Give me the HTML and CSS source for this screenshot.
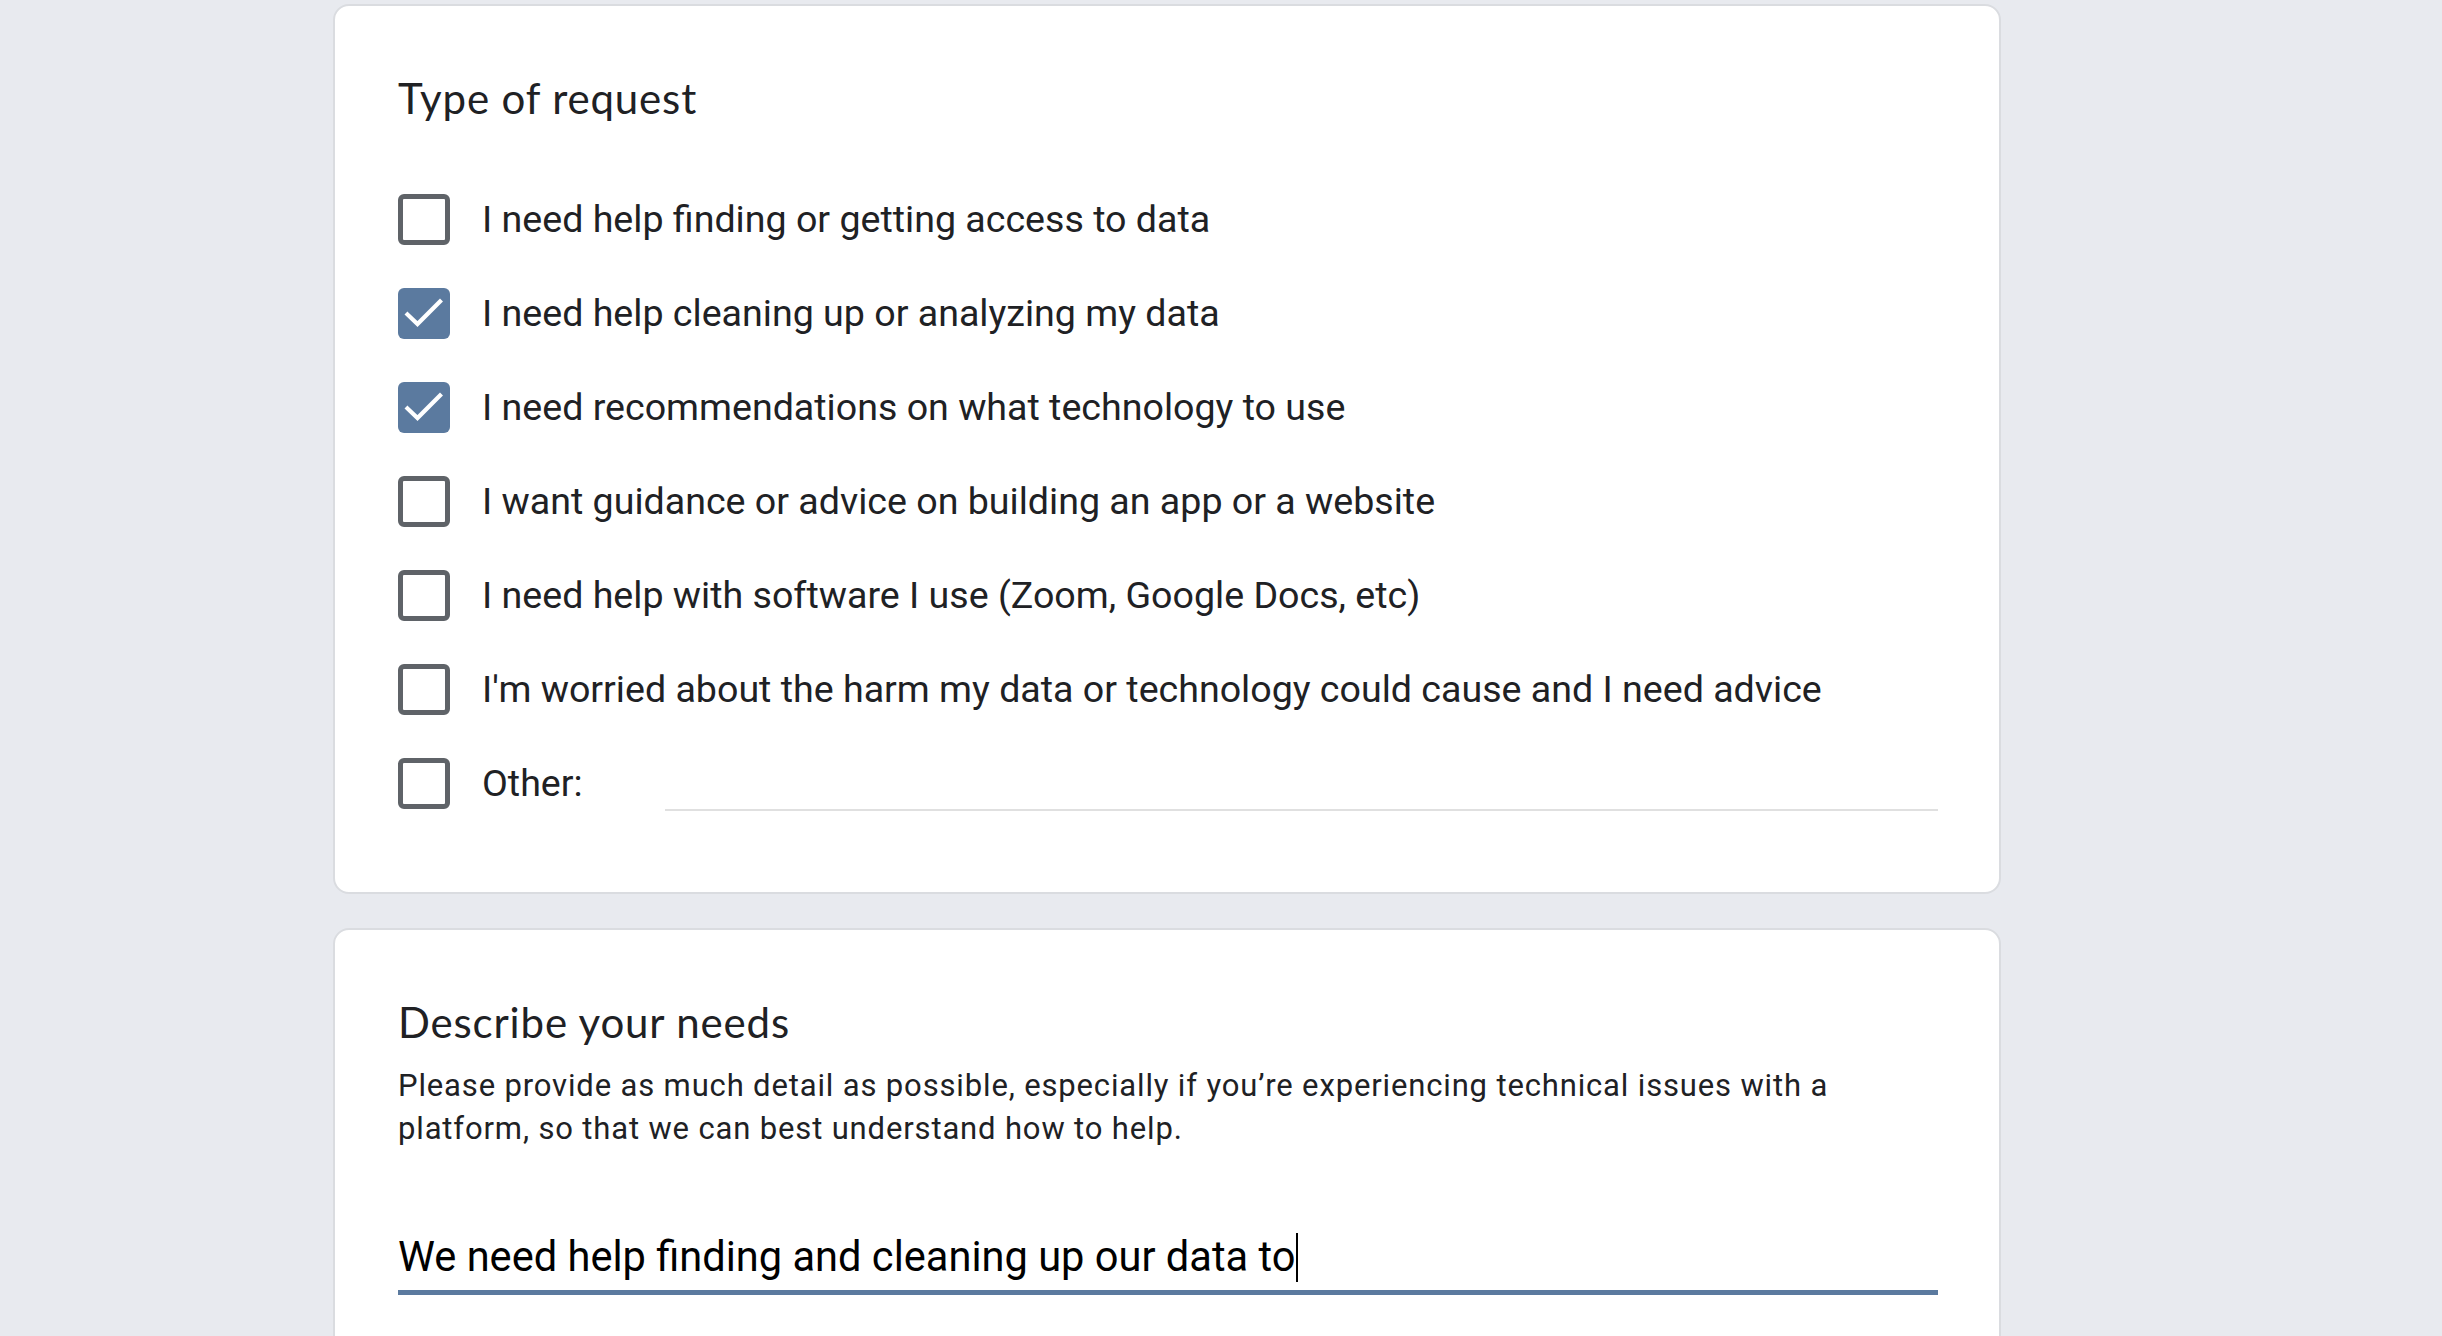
FILE: index.html
```html
<!DOCTYPE html>
<html lang="en">
<head>
<meta charset="utf-8">
<title>Request form</title>
<link rel="stylesheet" href="styles.css">
</head>
<body>
<main class="page">
  <section class="card">
    <h2 class="q-title">Type of request</h2>
    <ul class="options">
      <li class="option"><span class="box"></span><span class="label">I need help finding or getting access to data</span></li>
      <li class="option"><span class="box checked"><svg viewBox="0 0 52 52" width="52" height="52"><path d="M9.5 26.5 L19.5 36 L42 13.5" fill="none" stroke="#fff" stroke-width="4.2" stroke-linecap="square"/></svg></span><span class="label">I need help cleaning up or analyzing my data</span></li>
      <li class="option"><span class="box checked"><svg viewBox="0 0 52 52" width="52" height="52"><path d="M9.5 26.5 L19.5 36 L42 13.5" fill="none" stroke="#fff" stroke-width="4.2" stroke-linecap="square"/></svg></span><span class="label">I need recommendations on what technology to use</span></li>
      <li class="option"><span class="box"></span><span class="label">I want guidance or advice on building an app or a website</span></li>
      <li class="option"><span class="box"></span><span class="label">I need help with software I use (Zoom, Google Docs, etc)</span></li>
      <li class="option"><span class="box"></span><span class="label">I'm worried about the harm my data or technology could cause and I need advice</span></li>
      <li class="option"><span class="box"></span><span class="label other-label">Other:</span><span class="other-field"></span></li>
    </ul>
  </section>
  <section class="card card-second">
    <h2 class="q-title">Describe your needs</h2>
    <p class="q-desc">Please provide as much detail as possible, especially if you’re experiencing technical issues with a platform, so that we can best understand how to help.</p>
    <div class="answer">We need help finding and cleaning up our data to<span class="caret"></span></div>
  </section>
</main>
</body>
</html>
```

FILE: styles.css
```css
html, body {
  margin: 0;
  padding: 0;
}

body {
  background: #e8eaef;
  font-family: Roboto, "Liberation Sans", Arial, sans-serif;
  color: #202124;
  overflow: hidden;
}

.page {
  display: flex;
  flex-direction: column;
  gap: 34px;
  padding: 4px 0 0 333px;
}

.card {
  box-sizing: border-box;
  width: 1668px;
  background: #fff;
  border: 2px solid #dadce0;
  border-radius: 16px;
  padding: 67px 61px 62px 63px;
}

.card-second {
  padding-bottom: 120px;
}

.q-title {
  margin: 0;
  font-family: Lato, "Open Sans", sans-serif;
  font-weight: 400;
  font-size: 42px;
  line-height: 50px;
  letter-spacing: 0.85px;
  color: #202124;
}

.options {
  list-style: none;
  margin: 49px 0 0;
  padding: 0;
}

.option {
  display: flex;
  align-items: center;
  height: 94px;
}

.box {
  box-sizing: border-box;
  flex: none;
  width: 52px;
  height: 51px;
  border: 5px solid #5f6368;
  border-radius: 6px;
}

.box.checked {
  border: none;
  background: #5b7a9f;
}

.box svg {
  display: block;
}

.label {
  margin-left: 32px;
  font-size: 37.6px;
  line-height: 48px;
  color: #202124;
  white-space: nowrap;
}

.other-label {
  width: 183px;
  flex: none;
}

.other-field {
  flex: 1;
  align-self: flex-start;
  height: 56px;
  margin-top: 17px;
  border-bottom: 2px solid #e0e0e0;
}

.q-desc {
  margin: 17px 0 0;
  font-size: 31px;
  line-height: 43px;
  letter-spacing: 0.85px;
  color: #202124;
}

.answer {
  margin-top: 79px;
  font-size: 41.6px;
  line-height: 56px;
  padding-bottom: 5px;
  border-bottom: 5px solid #5b7a9f;
  color: #000;
  white-space: nowrap;
}

.caret {
  display: inline-block;
  width: 2px;
  height: 49px;
  background: #000;
  vertical-align: -11px;
  margin-left: 1px;
}
```
